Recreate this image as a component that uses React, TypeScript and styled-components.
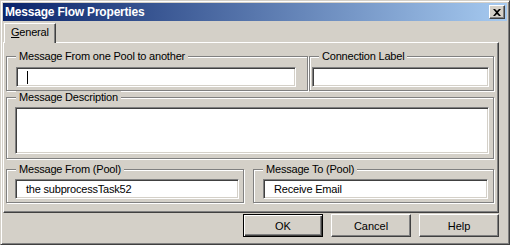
import styled, { createGlobalStyle } from 'styled-components';

const GlobalStyle = createGlobalStyle`
  html, body {
    margin: 0;
    padding: 0;
    background: #d4d0c8;
  }
  body {
    font-family: "Liberation Sans", Arial, sans-serif;
    font-size: 11px;
    color: #000;
  }
`;

const Window = styled.div`
  box-sizing: border-box;
  width: 510px;
  height: 245px;
  background: #d4d0c8;
  border: 1px solid;
  border-color: #d4d0c8 #404040 #404040 #d4d0c8;
  box-shadow: inset 1px 1px 0 #fff, inset -1px -1px 0 #808080;
  padding: 2px;
  display: flex;
  flex-direction: column;
`;

const TitleBar = styled.div`
  height: 18px;
  flex: none;
  background: linear-gradient(to right, #0a246a, #a6caf0);
  display: flex;
  align-items: center;
  justify-content: space-between;
  padding: 0 2px 0 2px;
`;

const Title = styled.span`
  color: #fff;
  font-weight: bold;
  font-size: 12px;
  letter-spacing: -0.2px;
`;

const CloseButton = styled.div`
  box-sizing: border-box;
  width: 16px;
  height: 14px;
  background: #d4d0c8;
  border: 1px solid;
  border-color: #fff #404040 #404040 #fff;
  box-shadow: inset -1px -1px 0 #808080;
  display: flex;
  align-items: center;
  justify-content: center;
  padding-right: 1px;
`;

const Body = styled.div`
  flex: 1;
  display: flex;
  flex-direction: column;
  padding: 2px 8px 0 0;
`;

const TabStrip = styled.div`
  display: flex;
  height: 19px;
  padding-left: 1px;
`;

const Tab = styled.div`
  position: relative;
  z-index: 1;
  box-sizing: border-box;
  height: 20px;
  margin-bottom: -1px;
  padding: 0 6px;
  background: #d4d0c8;
  border-top: 1px solid #fff;
  border-left: 1px solid #fff;
  border-right: 1px solid #404040;
  box-shadow: inset -1px 0 0 #808080;
  line-height: 17px;
  letter-spacing: -0.2px;
  u {
    text-decoration: underline;
    text-underline-offset: 1px;
  }
`;

const Panel = styled.div`
  box-sizing: border-box;
  height: 171px;
  border-top: 1px solid #fff;
  border-left: 1px solid #fff;
  border-right: 1px solid #404040;
  border-bottom: 1px solid #404040;
  box-shadow: inset -1px -1px 0 #808080;
  padding: 7px 4px 0 2px;
  display: flex;
  flex-direction: column;
`;

const Row = styled.div<{ $cols: string; $gap: number; $top: number }>`
  display: grid;
  grid-template-columns: ${p => p.$cols};
  column-gap: ${p => p.$gap}px;
  margin-top: ${p => p.$top}px;
`;

const Group = styled.fieldset<{ $pt: number; $pb: number }>`
  margin: 0;
  min-width: 0;
  padding: ${p => p.$pt}px 0 ${p => p.$pb}px 0;
  border: 1px solid #808080;
  box-shadow: inset 1px 1px 0 #fff, 1px 1px 0 #fff;
`;

const Legend = styled.legend`
  margin-left: 9px;
  padding: 0 3px;
  line-height: 13px;
  background: #d4d0c8;
  letter-spacing: -0.2px;
`;

const Field = styled.div<{ $ml: number; $mr: number; $h?: number }>`
  box-sizing: border-box;
  height: ${p => p.$h ?? 20}px;
  margin: 0 ${p => p.$mr}px 0 ${p => p.$ml}px;
  background: #fff;
  border: 1px solid;
  border-color: #808080 #fff #fff #808080;
  box-shadow: inset 1px 1px 0 #404040, inset -1px -1px 0 #d4d0c8;
  padding-left: 10px;
  display: flex;
  align-items: center;
  white-space: nowrap;
  letter-spacing: -0.2px;
`;

const Caret = styled.span`
  width: 1px;
  height: 13px;
  background: #000;
`;

const ButtonRow = styled.div`
  display: flex;
  justify-content: flex-end;
  gap: 8px;
  margin-top: 1px;
`;

const Button = styled.div<{ $default?: boolean }>`
  box-sizing: border-box;
  width: 80px;
  height: 23px;
  display: flex;
  align-items: center;
  justify-content: center;
  background: #d4d0c8;
  border: 1px solid;
  border-color: ${p => (p.$default ? '#000' : '#fff #404040 #404040 #fff')};
  box-shadow: ${p =>
    p.$default
      ? 'inset 1px 1px 0 #fff, inset -1px -1px 0 #404040, inset -2px -2px 0 #808080'
      : 'inset -1px -1px 0 #808080'};
`;

const App = () => {
  return (
    <>
      <GlobalStyle />
      <Window>
        <TitleBar>
          <Title>Message Flow Properties</Title>
          <CloseButton>
            <svg width="8" height="7" viewBox="0 0 8 7">
              <path d="M0 0h2l2 2 2-2h2L5 3.5 8 7H6L4 5 2 7H0l3-3.5z" fill="#000" />
            </svg>
          </CloseButton>
        </TitleBar>
        <Body>
          <TabStrip>
            <Tab>
              <u>G</u>eneral
            </Tab>
          </TabStrip>
          <Panel>
            <Row $cols="302px 1fr" $gap={1} $top={0}>
              <Group $pt={4} $pb={3}>
                <Legend>Message From one Pool to another</Legend>
                <Field $ml={9} $mr={11}>
                  <Caret />
                </Field>
              </Group>
              <Group $pt={4} $pb={3}>
                <Legend>Connection Label</Legend>
                <Field $ml={2} $mr={4} />
              </Group>
            </Row>
            <Row $cols="1fr" $gap={0} $top={0}>
              <Group $pt={3} $pb={4}>
                <Legend>Message Description</Legend>
                <Field $ml={8} $mr={4} $h={47} />
              </Group>
            </Row>
            <Row $cols="238px 1fr" $gap={9} $top={4}>
              <Group $pt={3} $pb={3}>
                <Legend>Message From (Pool)</Legend>
                <Field $ml={8} $mr={4}>the subprocessTask52</Field>
              </Group>
              <Group $pt={3} $pb={3}>
                <Legend>Message To (Pool)</Legend>
                <Field $ml={9} $mr={5}>Receive Email</Field>
              </Group>
            </Row>
          </Panel>
          <ButtonRow>
            <Button $default>OK</Button>
            <Button>Cancel</Button>
            <Button>Help</Button>
          </ButtonRow>
        </Body>
      </Window>
    </>
  );
};

export default App;
